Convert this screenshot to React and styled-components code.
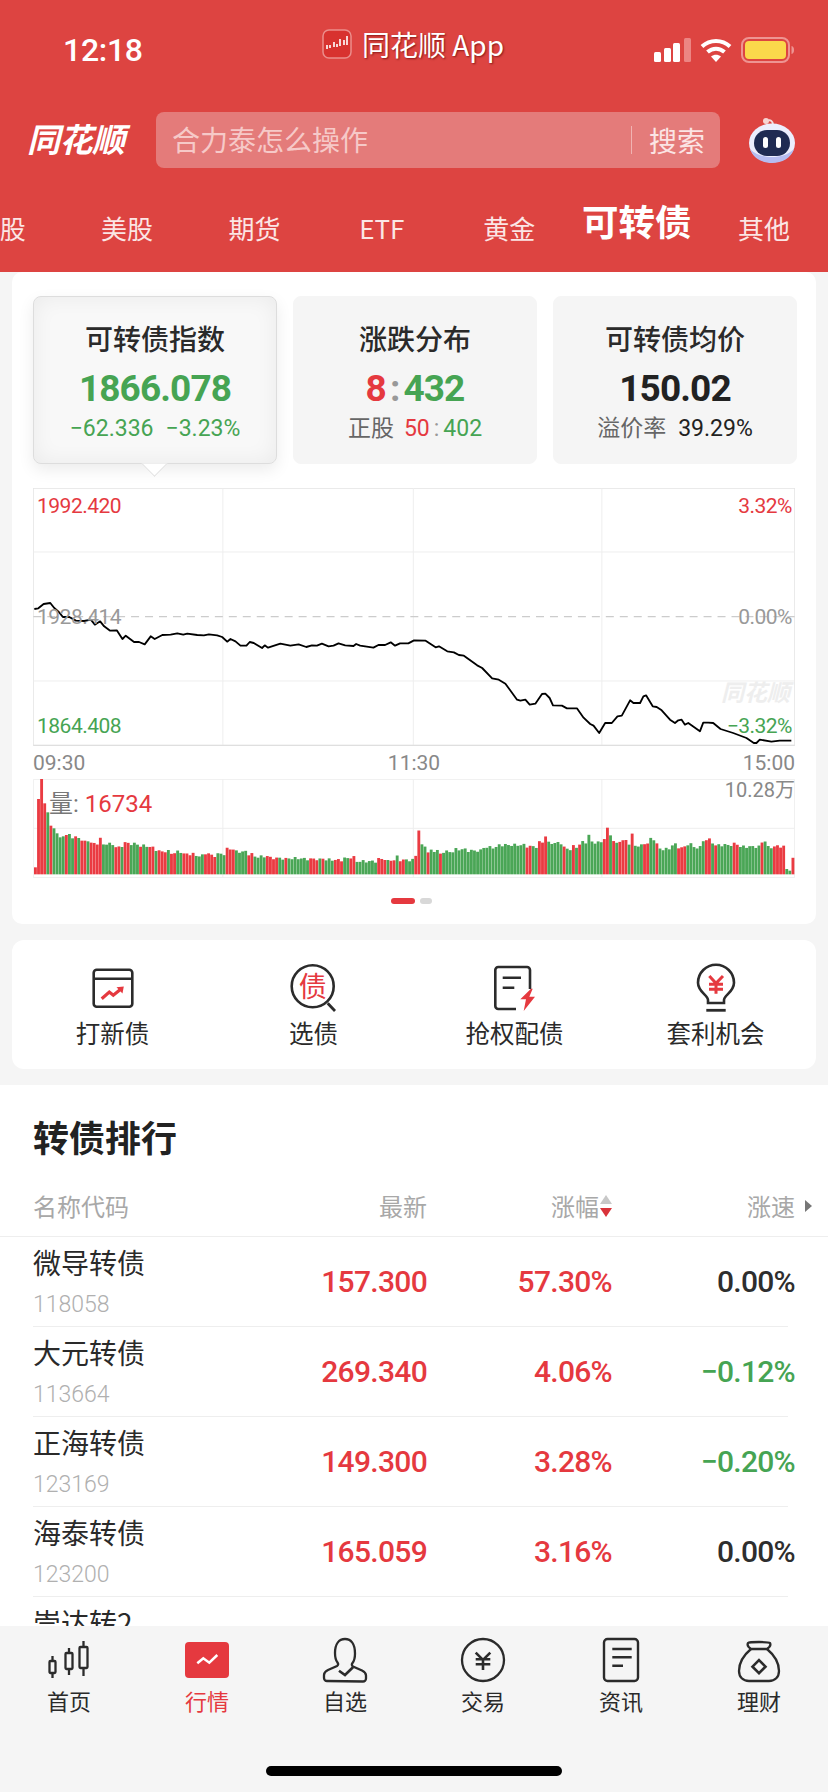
import React from "react";
import styled, { createGlobalStyle } from "styled-components";

const RED = "#e5393f";
const GREEN = "#46a453";
const INK = "#222";
const STROKE = "#2b2b2b";
const CJK = `"Noto Sans CJK SC", sans-serif`;
const NUM = `Roboto, "Noto Sans CJK SC", sans-serif`;

const GlobalStyle = createGlobalStyle`
  html, body {
    margin: 0;
    padding: 0;
    background: #f5f5f5;
    font-family: ${CJK};
  }
`;

const Screen = styled.div`
  width: 828px;
  height: 1792px;
  display: flex;
  flex-direction: column;
  overflow: hidden;
  background: #f5f5f5;
  color: ${INK};
`;

/* header */
const Header = styled.header`
  height: 272px;
  flex: none;
  background: #dd4441;
  color: #fff;
  overflow: hidden;
`;

const StatusBar = styled.div`
  height: 100px;
  margin-bottom: 12px;
  padding: 0 34px 0 63px;
  display: grid;
  grid-template-columns: 259px 1fr auto;
  align-items: center;
`;

const Clock = styled.div`
  font: 500 32px/1 ${NUM};
  letter-spacing: -0.3px;
`;

const AppTitle = styled.div`
  display: flex;
  align-items: center;
  gap: 10px;
  margin-top: -12px;
  font-size: 28px;
  line-height: 32px;
  text-shadow: 1px 1px 2px rgba(90, 0, 0, 0.65);
`;

const StatusIcons = styled.div`
  display: flex;
  align-items: center;
  gap: 9px;
`;

const SearchRow = styled.div`
  height: 56px;
  padding-left: 27px;
  display: flex;
  align-items: center;
`;

const Logo = styled.div`
  width: 129px;
  margin-top: -4px;
  font: italic 700 33px/1 ${CJK};
  letter-spacing: -0.5px;
`;

const SearchBox = styled.div`
  width: 564px;
  height: 56px;
  box-sizing: border-box;
  padding: 0 15px 0 16px;
  display: flex;
  align-items: center;
  border-radius: 8px;
  background: #e47b7a;
  font-size: 28px;
`;

const Placeholder = styled.span`
  flex: 1;
  margin-top: -2px;
  color: #f6c9c8;
`;

const SearchAction = styled.span`
  padding-left: 17px;
  border-left: 1px solid #f1b3b2;
  line-height: 28px;
  color: #fbe4e4;
`;

const RobotSlot = styled.div`
  margin-left: 27px;
  display: flex;
`;

const Tabs = styled.nav`
  height: 84px;
  padding-top: 17px;
  margin-left: -64px;
  display: flex;
  align-items: center;
`;

const Tab = styled.span`
  flex: none;
  width: 127.4px;
  text-align: center;
  white-space: nowrap;
  font-size: ${(p) => (p.$active ? "36.500px" : "26px")};
  font-weight: ${(p) => (p.$active ? 700 : 400)};
  margin-bottom: ${(p) => (p.$active ? "13px" : "0")};
  color: ${(p) => (p.$active ? "#fff" : "#fbe6e5")};
`;

/* content */
const Content = styled.main`
  flex: 1;
  min-height: 0;
  overflow: hidden;
`;

const IndexCard = styled.section`
  margin: 0 12px;
  padding: 24px 21px 20px;
  background: #fff;
  border-radius: 10px;
`;

const Summary = styled.div`
  display: grid;
  grid-template-columns: repeat(3, 244px);
  gap: 16px;
`;

const SummaryItem = styled.div`
  position: relative;
  height: 168px;
  box-sizing: border-box;
  padding-top: 23px;
  text-align: center;
  border-radius: 8px;
  background: ${(p) => (p.$active ? "#f8f8f8" : "#f5f5f5")};
  border: ${(p) => (p.$active ? "1px solid #ddd" : "1px solid #f5f5f5")};
  box-shadow: ${(p) =>
    p.$active
      ? "0 6px 16px rgba(0,0,0,0.08), inset 0 0 22px rgba(0,0,0,0.06)"
      : "none"};

  ${(p) =>
    p.$active &&
    `&::after {
      content: "";
      position: absolute;
      left: 111px;
      bottom: -10px;
      width: 18px;
      height: 18px;
      background: #fff;
      border-right: 1px solid #ddd;
      border-bottom: 1px solid #ddd;
      clip-path: polygon(100% 0, 100% 100%, 0 100%);
      transform: rotate(45deg);
    }`}
`;

const SummaryTitle = styled.div`
  font-size: 28px;
  line-height: 36px;
  font-weight: 500;
  color: #2a2a2a;
`;

const SummaryValue = styled.div`
  margin-top: 11px;
  font: 700 37px/44px ${NUM};
  letter-spacing: -0.9px;
  color: ${(p) => p.$color || INK};
`;

const Colon = styled.span`
  margin: 0 4px;
  color: #999;
`;

const SummaryMeta = styled.div`
  margin-top: 3px;
  font: 400 23px/30px ${NUM};
  color: ${(p) => p.$color || "#666"};
  display: flex;
  justify-content: center;
  gap: ${(p) => p.$gap || "10px"};
`;

const Hue = styled.span`
  color: ${(p) => p.$color};
`;

const PriceChart = styled.div`
  position: relative;
  margin-top: 24px;
  height: 259px;
`;

const ChartSvg = styled.svg`
  display: block;
  width: 100%;
  height: 100%;
`;

const AxisLabel = styled.span`
  position: absolute;
  top: ${(p) => p.$top}px;
  ${(p) => (p.$right ? "right: 3px;" : "left: 4px;")}
  font: 400 21px/26px ${NUM};
  letter-spacing: -0.5px;
  color: ${(p) => p.$color};
`;

const Watermark = styled.span`
  position: absolute;
  right: 5px;
  top: 190px;
  font: italic 700 23px/26px ${CJK};
  color: #eeeeee;
`;

const TimeAxis = styled.div`
  height: 32px;
  display: grid;
  grid-template-columns: 1fr 1fr 1fr;
  align-items: center;
  font: 400 21px/26px ${NUM};
  color: #888;

  span:nth-child(2) {
    text-align: center;
  }
  span:nth-child(3) {
    text-align: right;
  }
`;

const VolumeChart = styled.div`
  position: relative;
  height: 99px;
`;

const VolumeLabel = styled.span`
  position: absolute;
  left: 16px;
  top: 10px;
  font: 400 24px/30px ${NUM};
  color: #777;
`;

const VolumeMax = styled.span`
  position: absolute;
  right: 0;
  top: -2px;
  font: 400 20px/26px ${NUM};
  color: #888;
`;

const Dots = styled.div`
  margin-top: 20px;
  padding-right: 6px;
  display: flex;
  justify-content: center;
  gap: 5px;
`;

const Dot = styled.span`
  height: 6px;
  width: ${(p) => (p.$on ? "24px" : "12px")};
  border-radius: 3px;
  background: ${(p) => (p.$on ? RED : "#d8d8d8")};
`;

const Actions = styled.section`
  margin: 16px 12px;
  height: 129px;
  display: grid;
  grid-template-columns: repeat(4, 1fr);
  background: #fff;
  border-radius: 12px;
`;

const Action = styled.div`
  display: flex;
  flex-direction: column;
  align-items: center;
  padding-top: 22px;
  font-size: 24.5px;
  color: #2a2a2a;

  svg {
    display: block;
    height: 52px;
  }
  span {
    margin-top: 1px;
    line-height: 36px;
  }
`;

/* ranking list */
const Ranking = styled.section`
  height: 560px;
  background: #fff;
`;

const RankTitle = styled.h2`
  margin: 0;
  padding: 27px 0 0 33px;
  font-size: 36px;
  line-height: 48px;
  font-weight: 700;
  color: #222;
`;

const ListHead = styled.div`
  margin-top: 15px;
  height: 62px;
  box-sizing: border-box;
  padding: 0 33px;
  display: grid;
  grid-template-columns: 200px 194px 185px 183px;
  align-items: center;
  font-size: 24px;
  color: #a8a8a8;
  border-bottom: 1px solid #eee;
`;

const HeadCell = styled.span`
  position: relative;
  display: flex;
  align-items: center;
  justify-content: ${(p) => (p.$left ? "flex-start" : "flex-end")};
  gap: 1px;
`;

const MoreArrow = styled.span`
  position: absolute;
  right: -17px;
  border-left: 7px solid #777;
  border-top: 6px solid transparent;
  border-bottom: 6px solid transparent;
`;

const Row = styled.div`
  height: 90px;
  box-sizing: border-box;
  margin: 0 40px 0 33px;
  display: grid;
  grid-template-columns: 200px 194px 185px 176px;
  align-items: center;
  border-bottom: 1px solid #eee;
`;

const Name = styled.div`
  align-self: start;
  padding-top: 6px;
  font-size: 28px;
  line-height: 38px;
  white-space: nowrap;
  color: #2a2a2a;
`;

const Code = styled.div`
  margin-top: 7px;
  font: 300 23px/34px ${NUM};
  color: #b0b0b0;
`;

const Num = styled.div`
  text-align: right;
  font: 500 30px/1 ${NUM};
  letter-spacing: -0.7px;
  white-space: nowrap;
  color: ${(p) => p.$color};
  margin-right: ${(p) => (p.$last ? "-7px" : "0")};
`;

/* bottom bar */
const TabBar = styled.footer`
  position: relative;
  height: 166px;
  flex: none;
  background: #f5f5f5;
`;

const BarItems = styled.div`
  display: grid;
  grid-template-columns: repeat(6, 138px);
  justify-content: center;
`;

const BarItem = styled.div`
  display: flex;
  flex-direction: column;
  align-items: center;
  padding-top: 10px;
  font-size: 22px;
  color: ${(p) => (p.$active ? RED : "#2a2a2a")};

  svg {
    display: block;
    height: 50px;
  }
  span {
    margin-top: -3px;
    line-height: 34px;
  }
`;

const HomeIndicator = styled.div`
  position: absolute;
  left: 266px;
  bottom: 16px;
  width: 296px;
  height: 10px;
  border-radius: 5px;
  background: #000;
`;

/* chart data, in 3x coordinates taken off the picture */
const LEFT_LINE = [
  [100,388],[112,386],[128,373],[148,370],[160,385],[172,395],[186,412],[205,412],[225,423],[250,424],
  [270,420],[282,435],[298,425],[310,440],[328,453],[348,452],[365,478],[375,468],[400,487],[415,487],
  [432,494],[450,470],[462,478],[485,466],[510,465],[530,461],[548,465],[560,462],[590,466],[610,467],
  [625,464],[650,467],[665,472],[680,486],[690,478],[705,485],[720,498],[738,498],[748,487],[760,490],
  [785,505],[793,497],[803,504],[840,492],[870,498],[895,494],[918,502],[935,497],[950,498],[965,492],
  [985,500],[1000,498],[1015,491],[1035,497],[1060,499],[1068,493],[1080,498],[1120,504],[1135,496],
  [1155,496],[1172,488],[1185,498],[1200,491],[1225,491],
];
const RIGHT_LINE = [
  [0,482],[35,483],[65,503],[75,500],[100,515],[120,518],[135,526],[150,528],[190,557],[205,565],
  [235,596],[255,600],[275,612],[310,660],[320,663],[335,660],[348,675],[365,672],[385,643],[395,642],
  [408,655],[418,677],[445,678],[460,686],[490,686],[510,714],[530,733],[540,738],[557,760],[575,730],
  [595,730],[612,710],[625,708],[650,662],[660,670],[680,670],[690,650],[698,647],[718,680],[730,682],
  [745,692],[770,720],[785,730],[795,722],[805,720],[815,735],[825,730],[860,755],[870,729],[885,729],
  [900,730],[922,748],[960,760],[1000,775],[1022,790],[1030,790],[1040,780],[1075,786],[1100,783],[1135,783],
];
const LINE_POINTS = [...LEFT_LINE, ...RIGHT_LINE.map(([x, y]) => [x + 1242, y])]
  .map((p) => p.join(","))
  .join(" ");

// [end x, top y, colour] runs of the volume bars
const VOLUME_RUNS = [
  [106,1160,"r"],[116,955,"r"],[125,895,"r"],[135,968,"r"],[145,995,"g"],[154,1035,"r"],[163,1043,"g"],[173,1058,"g"],
  [182,1070,"g"],[191,1067,"g"],[201,1063,"r"],[210,1060,"g"],[219,1073,"g"],[229,1067,"r"],[238,1072,"g"],[248,1080,"r"],
  [258,1082,"g"],[288,1088,"r"],[300,1075,"r"],[335,1090,"g"],[355,1100,"r"],[365,1095,"g"],[383,1087,"r"],[410,1090,"g"],
  [420,1097,"r"],[440,1095,"g"],[460,1100,"r"],[470,1107,"g"],[495,1112,"r"],[505,1112,"g"],[520,1117,"r"],[545,1113,"g"],
  [580,1120,"r"],[605,1125,"g"],[620,1118,"r"],[625,1125,"g"],[640,1125,"r"],[675,1120,"g"],[695,1105,"r"],[735,1113,"g"],
  [755,1120,"r"],[790,1128,"g"],[800,1125,"r"],[805,1130,"g"],[830,1132,"r"],[850,1133,"g"],[860,1135,"r"],[905,1133,"g"],
  [925,1135,"g"],[950,1135,"r"],[960,1137,"g"],[970,1133,"r"],[1000,1137,"g"],[1020,1138,"r"],[1045,1133,"g"],[1065,1130,"r"],
  [1130,1142,"g"],[1150,1135,"r"],[1160,1142,"g"],[1180,1138,"r"],[1190,1128,"g"],[1210,1138,"r"],[1235,1138,"g"],[1247,1125,"r"],
  [1257,1047,"r"],[1272,1095,"g"],[1282,1115,"r"],[1312,1110,"g"],[1322,1120,"r"],[1360,1113,"g"],[1400,1106,"g"],[1440,1110,"g"],
  [1490,1100,"g"],[1572,1093,"g"],[1587,1097,"r"],[1607,1098,"g"],[1625,1085,"r"],[1637,1065,"r"],[1642,1090,"r"],[1682,1087,"g"],
  [1692,1100,"r"],[1712,1105,"g"],[1722,1097,"r"],[1730,1100,"g"],[1740,1090,"r"],[1760,1085,"g"],[1770,1063,"g"],[1802,1085,"g"],
  [1815,1072,"r"],[1823,1045,"r"],[1837,1062,"g"],[1847,1080,"r"],[1854,1090,"g"],[1882,1080,"r"],[1892,1088,"g"],[1902,1062,"r"],
  [1930,1095,"g"],[1947,1088,"r"],[1967,1075,"g"],[1977,1090,"r"],[2007,1105,"g"],[2032,1092,"g"],[2052,1100,"r"],[2072,1090,"g"],
  [2102,1100,"g"],[2110,1080,"g"],[2130,1077,"r"],[2140,1085,"g"],[2147,1095,"r"],[2197,1093,"g"],[2214,1090,"r"],[2280,1098,"g"],
  [2290,1085,"r"],[2302,1080,"g"],[2317,1100,"g"],[2357,1097,"r"],[2366,1165,"g"],[2377,1170,"g"],[2386,1135,"r"],
];

const buildBars = () => {
  const bars = [];
  let x = 99;
  let run = 0;
  let i = 0;
  while (x < 2386 && run < VOLUME_RUNS.length) {
    const [end, top, c] = VOLUME_RUNS[run];
    const jitter = top > 1150 || end < 260 ? 0 : Math.sin(i * 2.3) * 4;
    bars.push({ x, y: top + jitter, c });
    x += 9.3;
    i += 1;
    while (run < VOLUME_RUNS.length - 1 && x >= VOLUME_RUNS[run][0]) run += 1;
  }
  return bars;
};

const BARS = buildBars();

const PriceLines = () => (
  <ChartSvg viewBox="96 25 2292 777" preserveAspectRatio="none">
    <g stroke="#e8e8e8" strokeWidth="3" fill="none">
      <rect x="97" y="26" width="2290" height="771" stroke="#e6e6e6" />
      <path d="M97 217H2387M97 604H2387M667 26V797M1240 26V797M1807 26V797" stroke="#eeeeee" />
      <path d="M97 797H2387" stroke="#dcdcdc" />
    </g>
    <path d="M97 411H2387" stroke="#cccccc" strokeWidth="4" strokeDasharray="24 18" fill="none" />
    <polyline points={LINE_POINTS} fill="none" stroke="#000" strokeWidth="5.5" strokeLinejoin="round" />
  </ChartSvg>
);

const VolumeBars = () => (
  <ChartSvg viewBox="96 895 2292 297" preserveAspectRatio="none">
    <path
      d="M97 896H2387V1191H97ZM97 1043H2387M667 896V1191M1240 896V1191M1807 896V1191"
      stroke="#eeeeee"
      strokeWidth="3"
      fill="none"
    />
    {BARS.map((b, i) => (
      <rect
        key={i}
        x={b.x}
        y={b.y}
        width="8.6"
        height={1181 - b.y}
        fill={b.c === "r" ? "#ea3b42" : "#4aa656"}
      />
    ))}
  </ChartSvg>
);

const SmallAppIcon = () => (
  <svg width="30" height="30" viewBox="0 0 30 30">
    <rect x="1" y="1" width="28" height="28" rx="6" fill="#d8322f" stroke="#eb8d8b" strokeWidth="1.5" />
    <path d="M5 16v4M8 16v3M12 13v5M15 15v3M18 10v7M22 11v5M25 7v9" stroke="#fff" strokeWidth="1.6" />
  </svg>
);

const SignalIcon = () => (
  <svg width="37" height="24" viewBox="0 0 37 24">
    <rect x="0" y="14" width="7" height="10" rx="1.5" fill="#fff" />
    <rect x="10" y="10" width="7" height="14" rx="1.5" fill="#fff" />
    <rect x="19" y="5" width="7" height="19" rx="1.5" fill="#fff" />
    <rect x="30" y="0" width="7" height="24" rx="1.5" fill="#ec8583" />
  </svg>
);

const WifiIcon = () => (
  <svg width="32" height="24" viewBox="0 0 32 24" fill="none" stroke="#fff" strokeWidth="4">
    <path d="M2 8.500C10 1 22 1 30 8.500" />
    <path d="M7.500 14c5-4.500 12-4.500 17 0" />
    <path d="M16 24l-5-5.500c3-2.500 7-2.500 10 0z" fill="#fff" stroke="none" />
  </svg>
);

const BatteryIcon = () => (
  <svg width="53" height="26" viewBox="0 0 53 26">
    <rect x="1" y="1" width="47" height="24" rx="7" fill="none" stroke="#ee9492" strokeWidth="2" />
    <rect x="4" y="4" width="41" height="18" rx="4" fill="#fbd84b" />
    <path d="M50.500 9c2 .5 2.500 2 2.500 4s-.5 3.500-2.500 4z" fill="#ee9492" />
  </svg>
);

const RobotIcon = () => (
  <svg width="50" height="46" viewBox="0 0 50 46">
    <path d="M20 4c3-2 6 0 6 4" fill="none" stroke="#f3dcdd" strokeWidth="2" />
    <circle cx="19" cy="4" r="3" fill="#f7d3d2" />
    <ellipse cx="25" cy="26" rx="23" ry="19.500" fill="#eceefd" />
    <path d="M3 32c3 9 12 14 22 14s19-5 22-14c-6 6-14 8-22 8S9 38 3 32z" fill="#b5bcf0" />
    <rect x="7" y="13" width="36" height="26" rx="13" fill="#1f2b52" />
    <rect x="16" y="20" width="5" height="11" rx="2.500" fill="#fff" />
    <rect x="29" y="20" width="5" height="11" rx="2.500" fill="#fff" />
  </svg>
);

const IpoIcon = () => (
  <svg width="46" viewBox="0 0 46 52" fill="none">
    <rect x="3.700" y="7.700" width="38.600" height="37" rx="3" stroke={STROKE} strokeWidth="2.600" />
    <path d="M3.700 16.700h38.600" stroke={STROKE} strokeWidth="2.600" />
    <path d="M11.700 36.700l7.600-6.700 4 3.300 8-6.600" stroke={RED} strokeWidth="3.200" />
    <path d="M26.500 25.200l7.300-.7-1.300 7z" fill={RED} />
  </svg>
);

const PickIcon = () => (
  <svg width="52" viewBox="0 0 52 52" fill="none">
    <circle cx="24.700" cy="24.300" r="21" stroke={STROKE} strokeWidth="2.600" />
    <path d="M39.700 41.300l7.300 7.700" stroke={STROKE} strokeWidth="2.800" />
    <text x="24.700" y="34.500" textAnchor="middle" fontSize="28" fill={RED} fontFamily={CJK}>债</text>
  </svg>
);

const RightsIcon = () => (
  <svg width="46" viewBox="0 0 46 52" fill="none">
    <path d="M24 47H6.300a3 3 0 0 1-3-3V8a3 3 0 0 1 3-3H35a3 3 0 0 1 3 3v19" stroke={STROKE} strokeWidth="2.600" />
    <path d="M10.700 15.700H29M10.700 25.700h11.600" stroke={STROKE} strokeWidth="2.600" />
    <path d="M39 26.700L28.300 37.300H34L31.700 49 43 34.700h-5.700l3.400-8z" fill={RED} />
  </svg>
);

const BulbIcon = () => (
  <svg width="42" viewBox="0 0 42 52" fill="none">
    <path d="M13 41v-3C13 33 3 30 3 20.700a18 18 0 0 1 36 0C39 30 29 33 29 38v3z" stroke={STROKE} strokeWidth="2.600" />
    <path d="M11.300 48.300h19.400" stroke={STROKE} strokeWidth="2.800" />
    <path d="M14.300 14l6.700 7.300L28 14M21 21.300v10.400M14 22.300h14M14 27.300h14" stroke={RED} strokeWidth="3" />
  </svg>
);

const CandleIcon = () => (
  <svg width="44" viewBox="0 0 44 50" fill="none" stroke={STROKE} strokeWidth="2.300">
    <rect x="2.500" y="25" width="6" height="12" rx="1" />
    <path d="M5.500 20v5M5.500 37v5" />
    <rect x="18.500" y="17" width="7" height="16" rx="1" />
    <path d="M22 12v5M22 33v6" />
    <rect x="32.500" y="11" width="8" height="21" rx="1" />
    <path d="M36.500 5v6M36.500 32v8" />
  </svg>
);

const MarketIcon = () => (
  <svg width="44" viewBox="0 0 44 50">
    <rect x="0" y="6" width="44" height="36" rx="4" fill={RED} />
    <path d="M12.300 27.300l6-5 6 4.400 8-7.700" fill="none" stroke="#fff" strokeWidth="2.500" />
  </svg>
);

const PersonIcon = () => (
  <svg width="46" viewBox="0 0 46 50" fill="none" stroke={STROKE} strokeWidth="2.300">
    <path d="M5 45a3 3 0 0 1-3-3v-3c0-3 2-4 4-5l9-4c1.500-1 1.500-2 .5-3.500-2-2.500-2.500-5.500-2.500-9.500C13 8 17 3 23 3s10 5 10 14.500c0 4-.5 7-2.500 9.500-1 1.500-1 2.500.5 3.500l9 4c2 1 4 2 4 5v3a3 3 0 0 1-3 3z" />
    <path d="M17 34.700l6 4.300 8-7.700" strokeWidth="2.600" />
  </svg>
);

const TradeIcon = () => (
  <svg width="46" viewBox="0 0 46 50" fill="none" stroke={STROKE} strokeWidth="2.300">
    <circle cx="23" cy="24" r="21" />
    <path d="M15.700 16.700L23 24l7.300-7.300M23 24v10M15.700 23.300h14.600M15.700 28.300h14.600" strokeWidth="2.600" />
  </svg>
);

const NewsIcon = () => (
  <svg width="38" viewBox="0 0 38 50" fill="none" stroke={STROKE} strokeWidth="2.400">
    <rect x="2" y="3" width="34" height="42" rx="3.500" />
    <path d="M10.300 13h19.400M10.300 21.300h19.400M10.300 29.700h10.700" strokeWidth="2.400" />
  </svg>
);

const BagIcon = () => (
  <svg width="44" viewBox="0 0 44 50" fill="none" stroke={STROKE} strokeWidth="2.300">
    <path d="M14 13c-3-2-4-4-3-6 1-1 4-1 11-1s10 0 11 1c1 2 0 4-3 6z" />
    <path d="M14 13C8 18 2 26 2 35c0 6 4 10 10 10h20c6 0 10-4 10-10 0-9-6-17-12-22" />
    <path d="M22 24.200l6.500 6.500-6.500 6.500-6.500-6.500z" strokeWidth="2.600" />
  </svg>
);

const SortCaret = () => (
  <svg width="12" height="22" viewBox="0 0 12 22">
    <path d="M6 0l6 9H0z" fill="#c8c8c8" />
    <path d="M6 22l6-9H0z" fill="#d9333a" />
  </svg>
);

const TABS = [
  { label: "港股" },
  { label: "美股" },
  { label: "期货" },
  { label: "ETF" },
  { label: "黄金" },
  { label: "可转债", active: true },
  { label: "其他" },
];

const ACTIONS = [
  { label: "打新债", Icon: IpoIcon },
  { label: "选债", Icon: PickIcon },
  { label: "抢权配债", Icon: RightsIcon },
  { label: "套利机会", Icon: BulbIcon },
];

const RANKS = [
  { name: "微导转债", code: "118058", price: "157.300", pct: "57.30%", speed: "0.00%" },
  { name: "大元转债", code: "113664", price: "269.340", pct: "4.06%", speed: "-0.12%" },
  { name: "正海转债", code: "123169", price: "149.300", pct: "3.28%", speed: "-0.20%" },
  { name: "海泰转债", code: "123200", price: "165.059", pct: "3.16%", speed: "0.00%" },
  { name: "崇达转2", code: "128131", price: "", pct: "", speed: "" },
];

const NAV = [
  { label: "首页", Icon: CandleIcon },
  { label: "行情", Icon: MarketIcon, active: true },
  { label: "自选", Icon: PersonIcon },
  { label: "交易", Icon: TradeIcon },
  { label: "资讯", Icon: NewsIcon },
  { label: "理财", Icon: BagIcon },
];

const speedColor = (v) => (v.startsWith("-") ? GREEN : "#2e2e2e");

const App = () => (
  <Screen>
    <GlobalStyle />
    <Header>
      <StatusBar>
        <Clock>12:18</Clock>
        <AppTitle>
          <SmallAppIcon />
          同花顺 App
        </AppTitle>
        <StatusIcons>
          <SignalIcon />
          <WifiIcon />
          <BatteryIcon />
        </StatusIcons>
      </StatusBar>
      <SearchRow>
        <Logo>同花顺</Logo>
        <SearchBox>
          <Placeholder>合力泰怎么操作</Placeholder>
          <SearchAction>搜索</SearchAction>
        </SearchBox>
        <RobotSlot>
          <RobotIcon />
        </RobotSlot>
      </SearchRow>
      <Tabs>
        {TABS.map((t) => (
          <Tab key={t.label} $active={t.active}>
            {t.label}
          </Tab>
        ))}
      </Tabs>
    </Header>

    <Content>
      <IndexCard>
        <Summary>
          <SummaryItem $active>
            <SummaryTitle>可转债指数</SummaryTitle>
            <SummaryValue $color={GREEN}>1866.078</SummaryValue>
            <SummaryMeta $color={GREEN} $gap="12px">
              <span>−62.336</span>
              <span>−3.23%</span>
            </SummaryMeta>
          </SummaryItem>
          <SummaryItem>
            <SummaryTitle>涨跌分布</SummaryTitle>
            <SummaryValue>
              <Hue $color={RED}>8</Hue>
              <Colon>:</Colon>
              <Hue $color={GREEN}>432</Hue>
            </SummaryValue>
            <SummaryMeta>
              <span>正股</span>
              <span>
                <Hue $color={RED}>50</Hue>
                <Colon>:</Colon>
                <Hue $color={GREEN}>402</Hue>
              </span>
            </SummaryMeta>
          </SummaryItem>
          <SummaryItem>
            <SummaryTitle>可转债均价</SummaryTitle>
            <SummaryValue>150.02</SummaryValue>
            <SummaryMeta $gap="12px">
              <span>溢价率</span>
              <Hue $color={INK}>39.29%</Hue>
            </SummaryMeta>
          </SummaryItem>
        </Summary>

        <PriceChart>
          <PriceLines />
          <AxisLabel $top={5} $color={RED}>1992.420</AxisLabel>
          <AxisLabel $top={116} $color="#999">1928.414</AxisLabel>
          <AxisLabel $top={225} $color={GREEN}>1864.408</AxisLabel>
          <AxisLabel $top={5} $right $color={RED}>3.32%</AxisLabel>
          <AxisLabel $top={116} $right $color="#999">0.00%</AxisLabel>
          <AxisLabel $top={225} $right $color={GREEN}>−3.32%</AxisLabel>
          <Watermark>同花顺</Watermark>
        </PriceChart>
        <TimeAxis>
          <span>09:30</span>
          <span>11:30</span>
          <span>15:00</span>
        </TimeAxis>
        <VolumeChart>
          <VolumeBars />
          <VolumeLabel>
            量: <Hue $color={RED}>16734</Hue>
          </VolumeLabel>
          <VolumeMax>10.28万</VolumeMax>
        </VolumeChart>
        <Dots>
          <Dot $on />
          <Dot />
        </Dots>
      </IndexCard>

      <Actions>
        {ACTIONS.map(({ label, Icon }) => (
          <Action key={label}>
            <Icon />
            <span>{label}</span>
          </Action>
        ))}
      </Actions>

      <Ranking>
        <RankTitle>转债排行</RankTitle>
        <ListHead>
          <HeadCell $left>名称代码</HeadCell>
          <HeadCell>最新</HeadCell>
          <HeadCell>
            涨幅
            <SortCaret />
          </HeadCell>
          <HeadCell>
            涨速
            <MoreArrow />
          </HeadCell>
        </ListHead>
        {RANKS.map((r) => (
          <Row key={r.code}>
            <Name>
              {r.name}
              <Code>{r.code}</Code>
            </Name>
            <Num $color={RED}>{r.price}</Num>
            <Num $color={RED}>{r.pct}</Num>
            <Num $color={speedColor(r.speed)} $last>
              {r.speed.replace("-", "−")}
            </Num>
          </Row>
        ))}
      </Ranking>
    </Content>

    <TabBar>
      <BarItems>
        {NAV.map(({ label, Icon, active }) => (
          <BarItem key={label} $active={active}>
            <Icon />
            <span>{label}</span>
          </BarItem>
        ))}
      </BarItems>
      <HomeIndicator />
    </TabBar>
  </Screen>
);

export default App;
